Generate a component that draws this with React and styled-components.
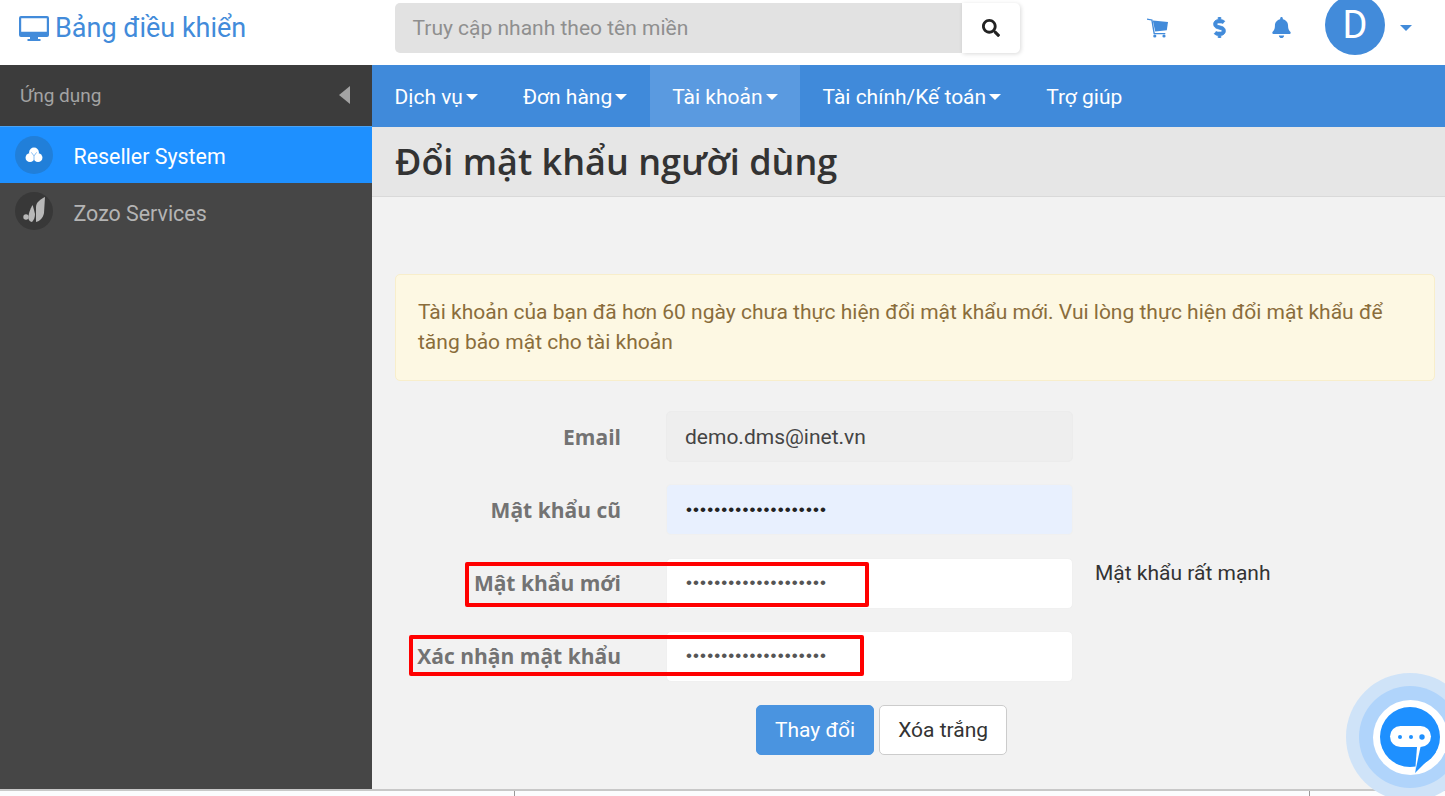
import React from "react";
import styled, { createGlobalStyle } from "styled-components";
import { FaSearch, FaDollarSign, FaBell } from "react-icons/fa";

const GlobalStyle = createGlobalStyle`
  html, body {
    margin: 0;
    padding: 0;
    height: 796px;
    overflow: hidden;
    background: #fff;
    font-family: "Roboto", "Liberation Sans", sans-serif;
  }
  * { box-sizing: border-box; }
`;

const Page = styled.div`
  width: 1445px;
  height: 796px;
  display: flex;
  flex-direction: column;
  position: relative;
  overflow: hidden;
`;

const TopBar = styled.header`
  height: 65px;
  flex: none;
  display: flex;
  align-items: center;
  background: #fff;
`;

const Brand = styled.div`
  width: 395px;
  padding-left: 19px;
  margin-top: -9px;
  display: flex;
  align-items: center;
  gap: 6px;
  color: #428bda;
  font-size: 27px;
`;

const Search = styled.div`
  width: 625px;
  height: 50px;
  margin-top: -10px;
  display: flex;
`;

const SearchInput = styled.div`
  flex: 1;
  background: #e2e2e2;
  color: #8f8f8f;
  font-size: 21px;
  display: flex;
  align-items: center;
  padding-left: 17.5px;
  border-radius: 5px 0 0 5px;
`;

const SearchButton = styled.div`
  width: 58px;
  background: #fff;
  border-radius: 0 5px 5px 0;
  box-shadow: 1px 1px 4px rgba(0, 0, 0, 0.15);
  display: flex;
  align-items: center;
  justify-content: center;
  color: #222;
  font-size: 18px;
`;

const Tools = styled.div`
  flex: 1;
  display: flex;
  align-items: center;
  padding-left: 127px;
  color: #428bda;
  font-size: 21px;
  margin-top: -10px;
`;

const ToolIcon = styled.span`
  width: 62px;
  display: flex;
  svg { display: block; }
`;

const Avatar = styled.div`
  width: 60px;
  height: 60px;
  border-radius: 50%;
  background: #428bda;
  color: #fff;
  font-size: 38px;
  display: flex;
  align-items: center;
  justify-content: center;
  margin: -5px 15px 0 -8px;
`;

const Caret = styled.span`
  display: inline-block;
  width: 0;
  height: 0;
  border-left: 6px solid transparent;
  border-right: 6px solid transparent;
  border-top: 6px solid ${p => p.$color || "#fff"};
`;

const Body = styled.div`
  flex: 1;
  display: flex;
  min-height: 0;
`;

const Sidebar = styled.aside`
  width: 372px;
  flex: none;
  background: #464646;
`;

const SideHead = styled.div`
  height: 62px;
  background: #3c3c3c;
  border-bottom: 1px solid #4aa3f5;
  display: flex;
  align-items: center;
  justify-content: space-between;
  padding: 0 22px 1px 20px;
  color: #a3a3a3;
  font-size: 19px;
`;

const CollapseArrow = styled.span`
  width: 0;
  height: 0;
  border-top: 9px solid transparent;
  border-bottom: 9px solid transparent;
  border-right: 11px solid #a3a3a3;
`;

const SideItem = styled.div`
  height: 56px;
  display: flex;
  align-items: center;
  padding-left: 15px;
  gap: 20.5px;
  font-size: 21.4px;
  background: ${p => (p.$active ? "#1e90ff" : "transparent")};
  color: ${p => (p.$active ? "#fff" : "#b4b4b4")};
`;

const SideLabel = styled.span`
  margin-top: ${p => (p.$active ? "2px" : "4px")};
`;

const SideIcon = styled.span`
  width: 38px;
  height: 38px;
  border-radius: 50%;
  background: ${p => (p.$active ? "#217fd9" : "#383838")};
  display: flex;
  align-items: center;
  justify-content: center;
  flex: none;
`;

const Main = styled.main`
  flex: 1;
  background: #f2f2f2;
  min-width: 0;
`;

const Nav = styled.nav`
  height: 62px;
  background: #408ada;
  display: flex;
`;

const NavItem = styled.div`
  display: flex;
  align-items: center;
  gap: 3px;
  padding: 1px 22.5px 0;
  color: #fff;
  font-size: 21px;
  background: ${p => (p.$active ? "#5a9ae0" : "transparent")};
`;

const TitleBar = styled.div`
  height: 70px;
  background: #e6e6e6;
  border-bottom: 1px solid #d9d9d9;
  padding-left: 23px;
  display: flex;
  align-items: center;
`;

const Title = styled.h1`
  margin: 0;
  font-family: "Open Sans", sans-serif;
  font-size: 36px;
  font-weight: 600;
  color: #333;
`;

const Content = styled.div`
  padding: 77px 10px 0 23px;
`;

const Alert = styled.div`
  height: 107px;
  background: #fdf8e3;
  border: 1px solid #f8eecb;
  border-radius: 5px;
  padding: 22px 22px;
  color: #8a6d3b;
  font-size: 21px;
  line-height: 30px;
`;

const Form = styled.form`
  margin-top: 30px;
  display: flex;
  flex-direction: column;
  gap: 22.33px;
`;

const Row = styled.div`
  height: 51px;
  display: grid;
  grid-template-columns: 226px 408px auto;
  column-gap: 45px;
  align-items: center;
  position: relative;
`;

const Label = styled.label`
  text-align: right;
  font-family: "Open Sans", sans-serif;
  font-weight: 700;
  font-size: 21px;
  color: #737373;
`;

const Field = styled.div`
  height: 51px;
  width: 407px;
  border-radius: 5px;
  border: 1px solid ${p => (p.$tone === "muted" ? "#ececec" : "#f0f0f0")};
  background: ${p =>
    p.$tone === "muted" ? "#eeeeee" : p.$tone === "filled" ? "#e8f0fe" : "#fff"};
  color: #444;
  font-size: 21px;
  display: flex;
  align-items: center;
  padding-left: 18px;
`;

const Dots = styled.span`
  margin-left: 1px;
  font-size: 17px;
  letter-spacing: 1.1px;
  color: ${p => p.$color || "#555"};
  font-family: "Liberation Sans", sans-serif;
`;

const Hint = styled.span`
  font-size: 21px;
  color: #333;
  margin: -21px 0 0 -24px;
`;

const Marker = styled.div`
  position: absolute;
  left: ${p => p.$left}px;
  top: 4px;
  width: ${p => p.$width}px;
  height: ${p => p.$height}px;
  border: 4px solid #f00;
  border-radius: 2px;
  pointer-events: none;
`;

const Actions = styled.div`
  margin: 1px 0 0 361px;
  display: flex;
  gap: 5px;
`;

const Button = styled.button`
  height: 50px;
  padding: 0 18px;
  border-radius: 5px;
  font-family: "Roboto", sans-serif;
  font-size: 21px;
  border: 1px solid ${p => (p.$primary ? "#4a94e0" : "#ccc")};
  background: ${p => (p.$primary ? "#4a94e0" : "#fff")};
  color: ${p => (p.$primary ? "#fff" : "#333")};
`;

const Footer = styled.div`
  position: absolute;
  left: 0;
  right: 0;
  bottom: 0;
  height: 7px;
  background: #fbfcfe;
  border-top: 2px solid #c8c8c8;
  display: flex;
`;

const Tick = styled.span`
  width: 1px;
  height: 5px;
  background: #999;
  margin-left: ${p => p.$at}px;
`;

const ChatBubble = styled.div`
  position: absolute;
  left: 1346px;
  top: 673px;
  width: 128px;
  height: 128px;
  border-radius: 50%;
  background: #cfe3f8;
  display: flex;
  align-items: center;
  justify-content: center;
`;

const ChatMiddle = styled.div`
  width: 102px;
  height: 102px;
  border-radius: 50%;
  background: #b0d4fb;
  display: flex;
  align-items: center;
  justify-content: center;
`;

const ChatInner = styled.div`
  width: 75px;
  height: 75px;
  border-radius: 50%;
  background: #fff;
  display: flex;
  align-items: center;
  justify-content: center;
  svg { margin-top: 6px; flex: none; }
`;

const DesktopIcon = () => (
  <svg width="30" height="25" viewBox="0 0 30 25" fill="currentColor">
    <path
      fillRule="evenodd"
      d="M2 0h26a2 2 0 0 1 2 2v17a2 2 0 0 1-2 2H2a2 2 0 0 1-2-2V2a2 2 0 0 1 2-2zM2.2 2.2v13.6h25.6V2.2z"
    />
    <path d="M11 21h8v2h2.5v2h-13v-2H11z" />
  </svg>
);

const CartIcon = () => (
  <svg width="21" height="20" viewBox="0 0 21 20" fill="currentColor">
    <path d="M0 0.5l5.5 1 2.3 13.5h10.5v1.3H6.6L4.3 2.6 0 1.8z" />
    <path d="M5.8 2.5L21 4l-1.2 8.2-11.6 1.4z" />
    <circle cx="7.8" cy="18" r="1.6" />
    <circle cx="17" cy="18" r="1.6" />
  </svg>
);

const CloudIcon = () => (
  <svg width="18" height="16" viewBox="0 0 20 18" fill="#fff">
    <circle cx="10" cy="6" r="5.5" />
    <circle cx="5.5" cy="12" r="5" />
    <circle cx="14.5" cy="12" r="5" />
    <path d="M7 6l3 4 3-4M10 10v6" stroke="#6db0f2" strokeWidth="0.9" fill="none" />
  </svg>
);

const LeafIcon = () => (
  <svg width="38" height="38" viewBox="0 0 38 38" fill="#b8b8b8">
    <circle cx="11" cy="25" r="2.7" />
    <path d="M17.7 13C15 17 13 23 13.5 27c.5 2 2.5 3 3.5 3 2-2 3-5 3-8z" />
    <path d="M30 5c-4 2-9 5-9 10v15c4-1 7-4 8-9z" />
  </svg>
);

const ChatIcon = () => (
  <svg width="60" height="66" viewBox="0 0 60 66">
    <circle cx="30" cy="30" r="30" fill="#1e90ff" />
    <path d="M35 66L56 45 38 42z" fill="#1e90ff" />
    <path d="M37 40l-2 26 5.5-26z" fill="#fff" />
    <rect x="10" y="19" width="41" height="21" rx="10.5" fill="#fff" />
    <circle cx="20" cy="30" r="2" fill="#1e90ff" />
    <circle cx="31" cy="30" r="2" fill="#1e90ff" />
    <circle cx="42" cy="30" r="2.7" fill="#1e90ff" />
  </svg>
);

const navItems = [
  { label: "Dịch vụ", caret: true },
  { label: "Đơn hàng", caret: true },
  { label: "Tài khoản", caret: true, active: true },
  { label: "Tài chính/Kế toán", caret: true },
  { label: "Trợ giúp" },
];

const dots = "••••••••••••••••••••";

export default function App() {
  return (
    <Page>
      <GlobalStyle />
      <TopBar>
        <Brand>
          <DesktopIcon />
          Bảng điều khiển
        </Brand>
        <Search>
          <SearchInput>Truy cập nhanh theo tên miền</SearchInput>
          <SearchButton>
            <FaSearch />
          </SearchButton>
        </Search>
        <Tools>
          <ToolIcon><CartIcon /></ToolIcon>
          <ToolIcon><FaDollarSign stroke="currentColor" strokeWidth={20} /></ToolIcon>
          <ToolIcon><FaBell /></ToolIcon>
          <Avatar>D</Avatar>
          <Caret $color="#428bda" />
        </Tools>
      </TopBar>
      <Body>
        <Sidebar>
          <SideHead>
            Ứng dụng
            <CollapseArrow />
          </SideHead>
          <SideItem $active>
            <SideIcon $active><CloudIcon /></SideIcon>
            <SideLabel $active>Reseller System</SideLabel>
          </SideItem>
          <SideItem>
            <SideIcon><LeafIcon /></SideIcon>
            <SideLabel>Zozo Services</SideLabel>
          </SideItem>
        </Sidebar>
        <Main>
          <Nav>
            {navItems.map(item => (
              <NavItem key={item.label} $active={item.active}>
                {item.label}
                {item.caret && <Caret />}
              </NavItem>
            ))}
          </Nav>
          <TitleBar>
            <Title>Đổi mật khẩu người dùng</Title>
          </TitleBar>
          <Content>
            <Alert>
              Tài khoản của bạn đã hơn 60 ngày chưa thực hiện đổi mật khẩu mới. Vui lòng thực hiện đổi mật khẩu để tăng bảo mật cho tài khoản
            </Alert>
            <Form>
              <Row>
                <Label>Email</Label>
                <Field $tone="muted">demo.dms@inet.vn</Field>
              </Row>
              <Row>
                <Label>Mật khẩu cũ</Label>
                <Field $tone="filled"><Dots $color="#222">{dots}</Dots></Field>
              </Row>
              <Row>
                <Label>Mật khẩu mới</Label>
                <Field><Dots>{dots}</Dots></Field>
                <Hint>Mật khẩu rất mạnh</Hint>
                <Marker $left={70} $width={404} $height={45} />
              </Row>
              <Row>
                <Label>Xác nhận mật khẩu</Label>
                <Field><Dots>{dots}</Dots></Field>
                <Marker $left={14} $width={455} $height={41} />
              </Row>
              <Actions>
                <Button $primary type="button">Thay đổi</Button>
                <Button type="button">Xóa trắng</Button>
              </Actions>
            </Form>
          </Content>
        </Main>
      </Body>
      <Footer>
        <Tick $at={514} />
        <Tick $at={794} />
      </Footer>
      <ChatBubble>
        <ChatMiddle>
          <ChatInner>
            <ChatIcon />
          </ChatInner>
        </ChatMiddle>
      </ChatBubble>
    </Page>
  );
}
